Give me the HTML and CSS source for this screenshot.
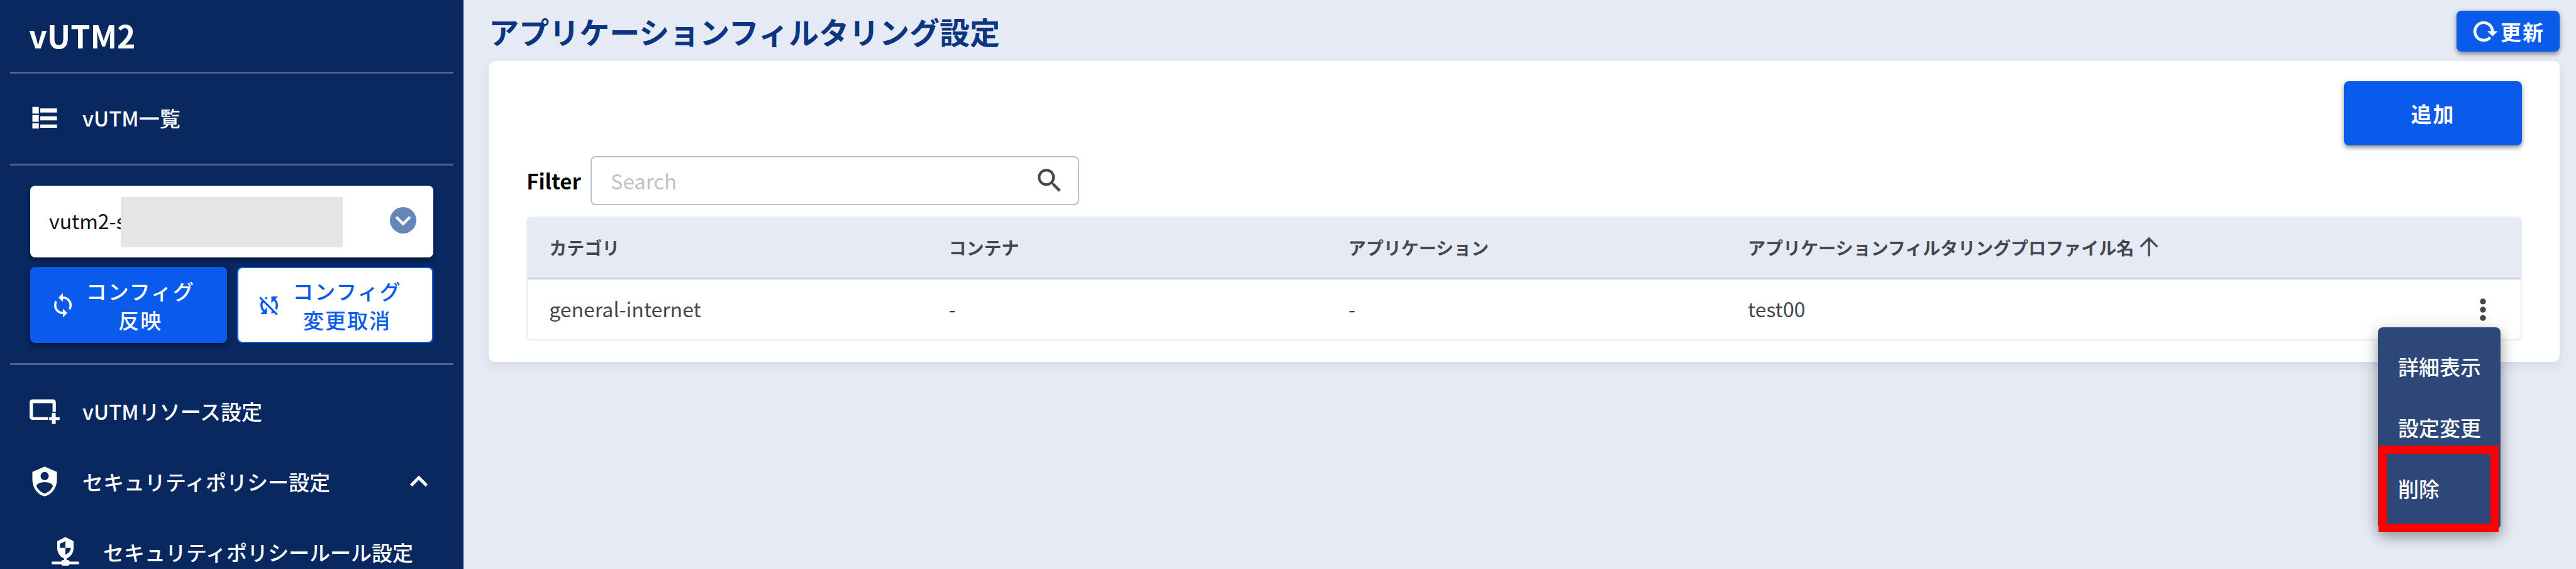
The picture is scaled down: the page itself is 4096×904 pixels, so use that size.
FILE: index.html
```html
<!DOCTYPE html>
<html lang="ja">
<head>
    <meta charset="UTF-8">
    <meta name="viewport" content="width=device-width, initial-scale=1.0">
    <title>アプリケーションフィルタリング設定</title>
    <link rel="stylesheet" href="styles.css">
</head>
<body>

    <div class="layout">
        <aside class="sidebar">
            <div class="sidebar-title">vUTM2</div>

            <nav class="section list-section">
                <a class="nav-item" href="#">
                    <svg class="nav-icon" viewBox="0 0 24 24"><path d="M3 4h4.700v5H3zM8.800 5.200h12.200v3H8.800zM3 10h4.700v5H3zM8.800 11h12.200v3H8.800zM3 16h4.700v4H3zM8.800 17h12.200v2.400H8.800z"/></svg>
                    <span>vUTM一覧</span>
                </a>
            </nav>

            <div class="section config">
                <div class="select-box">
                    <select class="select" aria-label="vUTM">
                        <option>vutm2-s</option>
                    </select>
                    <span class="mask"></span>
                    <svg class="select-arrow" viewBox="0 0 20 20"><circle cx="10" cy="10" r="10"/><path d="M4.800 7.500l5.200 5.200 5.200-5.200"/></svg>
                </div>
                <div class="config-buttons">
                    <button class="btn btn-config">
                        <svg class="icon" viewBox="0 0 24 24"><path d="M12,18A6,6 0 0,1 6,12C6,11 6.25,10.03 6.7,9.2L5.24,7.74C4.46,8.97 4,10.43 4,12A8,8 0 0,0 12,20V23L16,19L12,15M12,4V1L8,5L12,9V6A6,6 0 0,1 18,12C18,13 17.75,13.97 17.3,14.8L18.76,16.26C19.54,15.03 20,13.57 20,12A8,8 0 0,0 12,4Z"/></svg>
                        <span>コンフィグ<br>反映</span>
                    </button>
                    <button class="btn btn-config btn-outline">
                        <svg class="icon" viewBox="0 0 24 24"><path d="M20,4H14V10L16.24,7.76C17.32,8.85 18,10.34 18,12C18,13 17.75,13.94 17.32,14.77L18.78,16.23C19.55,15 20,13.56 20,12C20,9.79 19.09,7.8 17.64,6.36L20,4M2.86,5.41L5.22,7.77C4.45,9 4,10.44 4,12C4,14.21 4.91,16.2 6.36,17.64L4,20H10V14L7.76,16.24C6.68,15.15 6,13.66 6,12C6,11 6.25,10.06 6.68,9.23L14.76,17.31C14.5,17.44 14.26,17.56 14,17.65V19.74C14.79,19.53 15.54,19.2 16.22,18.78L18.58,21.14L19.85,19.87L4.14,4.14L2.86,5.41M10,6.35V4.26C9.2,4.47 8.45,4.8 7.77,5.22L9.23,6.68C9.5,6.56 9.73,6.44 10,6.35Z"/></svg>
                        <span>コンフィグ<br>変更取消</span>
                    </button>
                </div>
            </div>

            <nav class="section menu">
                <a class="nav-item" href="#">
                    <svg class="nav-icon" viewBox="0 0 24 24"><path d="M3 3.500a2 2 0 0 0-2 2v11a2 2 0 0 0 2 2h11.300v-2H3.400V6.200h14.400v6.500h2.400V5.500a2 2 0 0 0-2-2zM17.300 13.400h2.800v3.200H23v2h-2.900v2.900h-2.800v-2.900h-2.200v-2h2.200z"/></svg>
                    <span>vUTMリソース設定</span>
                </a>
                <a class="nav-item" href="#">
                    <svg class="nav-icon" viewBox="0 0 24 24"><path fill-rule="evenodd" d="M12,1L3,5V11C3,16.55 6.84,21.74 12,23C17.16,21.74 21,16.55 21,11V5L12,1M12,5A3,3 0 0,1 15,8A3,3 0 0,1 12,11A3,3 0 0,1 9,8A3,3 0 0,1 12,5M17.13,17C15.92,18.85 14.11,20.24 12,20.92C9.89,20.24 8.08,18.85 6.87,17C6.53,16.5 6.24,16 6,15.47C6,13.82 8.71,12.47 12,12.47C15.29,12.47 18,13.79 18,15.47C17.76,16 17.47,16.5 17.13,17Z"/></svg>
                    <span>セキュリティポリシー設定</span>
                    <svg class="icon nav-arrow" viewBox="0 0 24 24"><path d="M6 16.500L12 10.500l6 6 2-2-8-8-8 8z"/></svg>
                </a>
                <a class="nav-item nav-sub" href="#">
                    <svg class="nav-icon" viewBox="0 0 24 24"><path fill-rule="evenodd" d="M13 18h1a1 1 0 0 1 1 1h7v2h-7a1 1 0 0 1-1 1h-4a1 1 0 0 1-1-1H2v-2h7a1 1 0 0 1 1-1h1v-1.300C8 15.500 6 12.500 6 9V4l6-3 6 3v5c0 3.500-2 6.500-5 7.700zM12 4L8 6v3h4zM12 9v5c2.200-.8 3.700-2.700 4-5z"/></svg>
                    <span>セキュリティポリシールール設定</span>
                </a>
            </nav>
        </aside>

        <main class="main">
            <header class="page-header">
                <h1>アプリケーションフィルタリング設定</h1>
                <button class="btn btn-refresh">
                    <svg class="icon" viewBox="0 0 24 24"><path d="M2 12C2 16.970 6.030 21 11 21C13.390 21 15.680 20.060 17.400 18.400L15.900 16.900C14.630 18.250 12.860 19 11 19C4.760 19 1.640 11.460 6.050 7.050C10.460 2.640 18 5.770 18 12H15L19 16H19.100L23 12H20C20 7.030 15.970 3 11 3C6.030 3 2 7.030 2 12Z" stroke="currentColor" stroke-width=".6"/></svg>
                    <span>更新</span>
                </button>
            </header>

            <section class="card">
                <div class="toolbar">
                    <button class="btn btn-add">追加</button>
                </div>

                <div class="filter">
                    <label for="search">Filter</label>
                    <div class="search-box">
                        <input type="text" id="search" placeholder="Search">
                        <svg class="search-icon" viewBox="0 0 24 24"><path d="M9.500,3A6.500,6.500 0 0,1 16,9.500C16,11.110 15.410,12.590 14.440,13.730L14.710,14H15.500L20.500,19L19,20.500L14,15.500V14.710L13.730,14.440C12.590,15.410 11.110,16 9.500,16A6.500,6.500 0 0,1 3,9.500A6.500,6.500 0 0,1 9.500,3M9.500,5C7,5 5,7 5,9.500C5,12 7,14 9.500,14C12,14 14,12 14,9.500C14,7 12,5 9.500,5Z"/></svg>
                    </div>
                </div>

                <table class="table">
                    <thead>
                        <tr>
                            <th>カテゴリ</th>
                            <th>コンテナ</th>
                            <th>アプリケーション</th>
                            <th>
                                <div class="sort">アプリケーションフィルタリングプロファイル名<svg class="sort-icon" viewBox="0 0 24 24"><path d="M12 20.500V4M4 11.500L12 3.500L20 11.500"/></svg></div>
                            </th>
                            <th class="actions"></th>
                        </tr>
                    </thead>
                    <tbody>
                        <tr>
                            <td>general-internet</td>
                            <td>-</td>
                            <td>-</td>
                            <td>test00</td>
                            <td class="actions">
                                <div class="dropdown">
                                    <button class="btn-dots" aria-label="メニュー">
                                        <svg class="icon" viewBox="0 0 24 24"><circle cx="12" cy="4.500" r="2.700"/><circle cx="12" cy="12" r="2.700"/><circle cx="12" cy="19.500" r="2.700"/></svg>
                                    </button>
                                    <div class="dropdown-menu">
                                        <button class="dropdown-item">詳細表示</button>
                                        <button class="dropdown-item">設定変更</button>
                                        <button class="dropdown-item marked">削除</button>
                                    </div>
                                </div>
                            </td>
                        </tr>
                    </tbody>
                </table>
            </section>
        </main>
    </div>

</body>
</html>
```
FILE: styles.css
```css
* {
    box-sizing: border-box;
}
body {
    margin: 0;
    font-family: "Noto Sans CJK JP", "Noto Sans", sans-serif;
    font-size: 33px;
    background-color: #e5eaf4;
    overflow: hidden;
}
button, input, select {
    font-family: inherit;
    font-size: inherit;
    color: inherit;
}
button {
    cursor: pointer;
}
.layout {
    display: flex;
    height: 100vh;
}
.icon {
    width: 42px;
    height: 42px;
    flex-shrink: 0;
    fill: currentColor;
}

/* sidebar */
.sidebar {
    width: 18%;
    flex-shrink: 0;
    padding: 0 16px;
    background-color: #08285f;
    color: #fff;
    overflow: hidden;
}
.sidebar-title {
    height: 114px;
    padding-left: 30px;
    line-height: 110px;
    font-size: 50px;
    font-weight: bold;
}
.section {
    border-top: 3px solid #4d638c;
}
.nav-item {
    display: flex;
    align-items: center;
    height: 112px;
    padding: 0 34px 0 29px;
    line-height: 40px;
    color: #fff;
    text-decoration: none;
    white-space: nowrap;
    font-weight: 500;
}
.nav-icon {
    width: 52px;
    height: 52px;
    margin-right: 34px;
    flex-shrink: 0;
    fill: currentColor;
}
.nav-arrow {
    margin-left: auto;
}
.nav-sub {
    padding: 0 0 0 62px;
}
.list-section {
    padding: 14px 0 17px;
}
.config {
    padding: 32px;
}
.select-box {
    position: relative;
    margin-bottom: 15px;
}
.select {
    display: block;
    width: 100%;
    height: 114px;
    padding: 0 30px 4px;
    border: none;
    border-radius: 8px;
    background-color: #fff;
    color: #111;
    font-size: 32px;
    appearance: none;
    box-shadow: 0 4px 6px rgba(0, 0, 0, 0.4);
}
.mask {
    position: absolute;
    top: 18px;
    left: 144px;
    width: 55%;
    height: 80px;
    background-color: #e5e5e5;
}
.select-arrow {
    position: absolute;
    top: 34px;
    right: 27px;
    width: 42px;
    height: 42px;
    fill: #6685bb;
}
.select-arrow path {
    fill: none;
    stroke: #fff;
    stroke-width: 2;
}
.config-buttons {
    display: grid;
    grid-template-columns: 1fr 1fr;
    gap: 16px;
}
.btn {
    display: flex;
    align-items: center;
    justify-content: center;
    padding: 0;
    border: none;
    border-radius: 8px;
    background-color: #0a5beb;
    color: #fff;
    font-weight: bold;
    letter-spacing: 2px;
    box-shadow: 0 4px 6px rgba(0, 0, 0, 0.35), 0 2px 12px rgba(0, 0, 0, 0.12);
}
.btn-config {
    height: 121px;
    padding-right: 20px;
    gap: 16px;
    line-height: 46px;
    font-weight: 500;
}
.btn-outline {
    border: 2px solid #0a5beb;
    background-color: #fff;
    color: #0a5beb;
    box-shadow: none;
}
.menu {
    padding-top: 17px;
}

/* main */
.main {
    flex: 1;
    padding: 17px 26px 0 40px;
}
.page-header {
    display: flex;
    align-items: center;
    justify-content: space-between;
    margin-bottom: 15px;
}
.page-header h1 {
    margin: 0;
    line-height: 65px;
    font-size: 48px;
    color: #0b3580;
}
.btn-refresh {
    width: 164px;
    height: 65px;
    gap: 4px;
}
.card {
    padding: 32px 60px 34px;
    border-radius: 10px;
    background-color: #fff;
    box-shadow: 0 6px 16px rgba(20, 40, 80, 0.08);
}
.toolbar {
    display: flex;
    justify-content: flex-end;
    margin-bottom: 17px;
}
.btn-add {
    width: 283px;
    height: 102px;
}
.filter {
    display: flex;
    align-items: center;
    gap: 15px;
    margin-bottom: 18px;
}
.filter label {
    font-weight: bold;
    color: #000;
}
.search-box {
    display: flex;
    align-items: center;
    width: 24.5%;
    height: 78px;
    padding: 0 20px 0 30px;
    border: 2px solid #bcbec5;
    border-radius: 8px;
    color: #45474f;
}
.search-box input {
    flex: 1;
    padding: 0;
    border: none;
    outline: none;
    background: none;
}
.search-box input::placeholder {
    color: #c0c2c8;
}
.search-icon {
    width: 50px;
    height: 50px;
    fill: currentColor;
}
.table {
    width: 100%;
    table-layout: fixed;
    border: 2px solid #e9eef6;
    border-radius: 8px;
    border-spacing: 0;
    color: #45474f;
    font-size: 32px;
}
.table th, .table td {
    padding: 0 34px 4px;
    text-align: left;
    white-space: nowrap;
}
.table th {
    height: 98px;
    padding-bottom: 2px;
    border-bottom: 3px solid #cdd1dc;
    background-color: #e5eaf4;
    font-size: 28px;
}
.table td {
    height: 95px;
}
.table .actions {
    width: 19.8%;
    padding: 0 32px 0 0;
}
.sort {
    display: flex;
    align-items: center;
    gap: 4px;
}
.sort-icon {
    width: 40px;
    height: 40px;
    flex-shrink: 0;
    fill: none;
    stroke: currentColor;
    stroke-width: 2;
}
.dropdown {
    position: relative;
    width: 56px;
    margin-left: auto;
}
.btn-dots {
    display: flex;
    align-items: center;
    justify-content: center;
    width: 56px;
    height: 56px;
    padding: 0;
    border: none;
    background: none;
}
.dropdown-menu {
    position: absolute;
    top: 100%;
    right: 0;
    width: 195px;
    padding: 16px 0 14px;
    border-radius: 8px;
    background-color: #2d4878;
    box-shadow: 0 12px 20px rgba(0, 0, 0, 0.3), 0 4px 32px rgba(0, 0, 0, 0.14);
    font-size: 33px;
}
.dropdown-item {
    position: relative;
    display: block;
    width: 100%;
    height: 97px;
    padding: 0 0 4px 32px;
    border: none;
    background: none;
    color: #fff;
    font-weight: 500;
    text-align: left;
}
.marked::after {
    content: "";
    position: absolute;
    top: -22px;
    right: 3px;
    bottom: -18px;
    left: 1px;
    border: 13px solid #f00;
}
```
